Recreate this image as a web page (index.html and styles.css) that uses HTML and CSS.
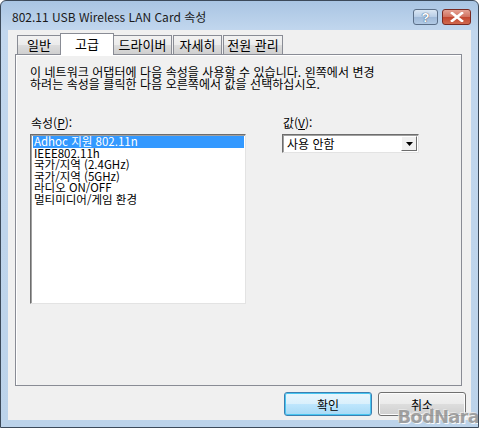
FILE: index.html
```html
<!DOCTYPE html>
<html lang="ko">
<head>
    <meta charset="UTF-8">
    <title>802.11 USB Wireless LAN Card 속성</title>
    <link rel="stylesheet" href="styles.css">
</head>
<body>
    <div class="window">
        <div class="titlebar">
            <span class="title">802.11 USB Wireless LAN Card 속성</span>
            <div class="caption-buttons">
                <div class="cap-btn help">?</div>
                <div class="cap-btn close">
                    <svg width="14" height="10" viewBox="0 0 14 10">
                        <path d="M2 1 L12 9 M12 1 L2 9" stroke="#fff" stroke-width="2.6" stroke-linecap="square"/>
                    </svg>
                </div>
            </div>
        </div>
        <div class="client">
            <div class="tabs">
                <div class="tab w-general">일반</div>
                <div class="tab active">고급</div>
                <div class="tab w-driver">드라이버</div>
                <div class="tab w-detail">자세히</div>
                <div class="tab w-power">전원 관리</div>
            </div>
            <div class="panel">
                <p class="desc">이 네트워크 어댑터에 다음 속성을 사용할 수 있습니다. 왼쪽에서 변경<br>하려는 속성을 클릭한 다음 오른쪽에서 값을 선택하십시오.</p>
                <div class="fields">
                    <div class="prop-col">
                        <div class="label">속성(<u>P</u>):</div>
                        <div class="listbox">
                            <div class="item selected">Adhoc 지원 802.11n</div>
                            <div class="item">IEEE802.11h</div>
                            <div class="item">국가/지역 (2.4GHz)</div>
                            <div class="item">국가/지역 (5GHz)</div>
                            <div class="item">라디오 ON/OFF</div>
                            <div class="item">멀티미디어/게임 환경</div>
                        </div>
                    </div>
                    <div class="value-col">
                        <div class="label">값(<u>V</u>):</div>
                        <div class="combo">
                            <span class="combo-text">사용 안함</span>
                            <div class="combo-btn">
                                <svg width="7" height="4" viewBox="0 0 7 4"><path d="M0 0 H7 L3.5 4 Z" fill="#000"/></svg>
                            </div>
                        </div>
                    </div>
                </div>
            </div>
            <div class="buttons">
                <div class="btn default">확인</div>
                <div class="btn">취소</div>
            </div>
        </div>
        <div class="watermark">BodNara</div>
    </div>
</body>
</html>
```

FILE: styles.css
```css
body {
    margin: 0;
    font-family: "Noto Sans CJK KR", "Liberation Sans", sans-serif;
    font-size: 12px;
    color: #000;
    background: #fff;
}
.window {
    position: relative;
    width: 479px;
    height: 428px;
    box-sizing: border-box;
    border: 1px solid #3c4a5a;
    border-radius: 6px 6px 0 0;
    background: linear-gradient(to bottom, #a9c5e3 0px, #c2d7ee 30px, #bcd3ea 100%);
    display: flex;
    flex-direction: column;
    overflow: hidden;
}
.titlebar {
    height: 29px;
    display: flex;
    align-items: center;
    justify-content: space-between;
    padding: 0 7px 0 11px;
}
.title {
    font-size: 12px;
    color: #1a1a1a;
    margin-top: 1px;
}
.caption-buttons {
    display: flex;
    gap: 4px;
    align-self: flex-start;
    margin-top: 8px;
}
.cap-btn {
    height: 16px;
    box-sizing: border-box;
    border: 1px solid #5b6f88;
    border-radius: 3px;
    display: flex;
    align-items: center;
    justify-content: center;
}
.help {
    width: 25px;
    background: linear-gradient(to bottom, #dbe7f4 0%, #b7cde6 50%, #9fb9d8 51%, #b2cae5 100%);
    font-family: "Liberation Sans", sans-serif;
    font-weight: bold;
    font-size: 13px;
    color: #fff;
    text-shadow: 0 0 1px #3d5878, 0 0 1px #3d5878;
}
.close {
    width: 29px;
    border-color: #7a2a22;
    background: linear-gradient(to bottom, #e4a193 0%, #d1715f 50%, #c2452f 51%, #d06a4f 100%);
}
.client {
    flex: 1;
    margin: 0 7px 7px 7px;
    background: #f0f0f0;
    display: flex;
    flex-direction: column;
    padding: 3px 9px 0 7px;
}
.tabs {
    display: flex;
    align-items: flex-end;
    padding-left: 2px;
    height: 21px;
    position: relative;
    z-index: 1;
}
.tab {
    height: 19px;
    box-sizing: border-box;
    border: 1px solid #898c95;
    border-bottom: none;
    background: linear-gradient(to bottom, #f2f2f2 0%, #ebebeb 50%, #dddddd 51%, #cfcfcf 100%);
    margin-right: 1px;
    line-height: 18px;
    font-size: 13px;
    text-align: center;
}
.w-general {
    width: 44px;
}
.w-driver {
    width: 59px;
}
.w-detail {
    width: 49px;
}
.w-power {
    width: 60px;
}
.tab.active {
    width: 54px;
    height: 22px;
    background: #fff;
    margin: 0 -1px -1px -2px;
    line-height: 19px;
}
.panel {
    height: 332px;
    box-sizing: border-box;
    border: 1px solid #898c95;
    background: #f0f0f0;
    box-shadow: inset 1px 1px 0 #fff;
    padding: 11px 14px 0 14px;
}
.desc {
    margin: 0;
    line-height: 12px;
    font-size: 12px;
    letter-spacing: 0.05px;
}
.fields {
    display: flex;
    margin-top: 27px;
}
.prop-col {
    width: 216px;
}
.value-col {
    margin-left: 36px;
}
.label {
    line-height: 12px;
    margin-bottom: 5px;
    padding-left: 1px;
}
.listbox {
    height: 170px;
    box-sizing: border-box;
    background: #fff;
    border: 1px solid #e3e3e3;
    border-top-color: #6d6d6d;
    border-left-color: #6d6d6d;
    box-shadow: inset 1px 1px 0 #a0a0a0;
    padding: 1px 1px 0 2px;
}
.item {
    height: 11.6px;
    line-height: 11.6px;
    font-size: 11.5px;
    padding-left: 1px;
    white-space: nowrap;
}
.item.selected {
    background: #3399ff;
    color: #fff;
}
.combo {
    width: 137px;
    height: 19px;
    box-sizing: border-box;
    background: #fff;
    border: 1px solid #e3e3e3;
    border-top-color: #6d6d6d;
    border-left-color: #6d6d6d;
    box-shadow: inset 1px 1px 0 #a0a0a0;
    display: flex;
    align-items: center;
    justify-content: space-between;
    padding: 0 1px 0 4px;
    margin-top: 1px;
}
.combo-text {
    font-size: 12px;
    line-height: 14px;
}
.combo-btn {
    width: 16px;
    height: 15px;
    box-sizing: border-box;
    background: #f0f0f0;
    border: 1px solid #fff;
    border-right-color: #6d6d6d;
    border-bottom-color: #6d6d6d;
    display: flex;
    align-items: center;
    justify-content: center;
}
.buttons {
    display: flex;
    justify-content: flex-end;
    gap: 6px;
    margin-top: 6px;
    margin-right: -4px;
}
.btn {
    width: 88px;
    height: 24px;
    box-sizing: border-box;
    border: 1px solid #707070;
    border-radius: 3px;
    background: linear-gradient(to bottom, #f2f2f2 0%, #ebebeb 50%, #dddddd 51%, #cfcfcf 100%);
    box-shadow: inset 0 0 0 1px #fcfcfc;
    display: flex;
    align-items: center;
    justify-content: center;
    font-size: 12px;
}
.btn.default {
    border-color: #3c7fb1;
    background: linear-gradient(to bottom, #eaf6fd 0%, #d9f0fc 50%, #bee6fd 51%, #a7d9f5 100%);
    box-shadow: inset 0 0 0 1px #48c6f1;
}
.watermark {
    position: absolute;
    right: -1px;
    bottom: 0;
    font-family: "DejaVu Sans", sans-serif;
    font-weight: bold;
    font-size: 18px;
    letter-spacing: -0.8px;
    color: #9a9a9a;
    text-shadow: 1px 1px 0 #ffffff, -1px -1px 0 #e8e8e8;
    opacity: 0.9;
}
```
